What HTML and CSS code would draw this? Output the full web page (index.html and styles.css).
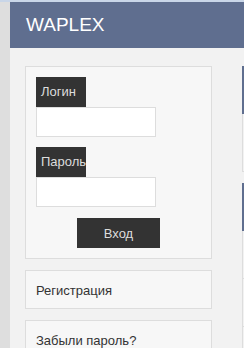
FILE: index.html
```html
<!DOCTYPE html>
<html lang="ru">
<head>
  <meta charset="UTF-8" />
  <meta name="viewport" content="width=device-width, initial-scale=1" />
  <title>WAPLEX</title>
  <link rel="stylesheet" href="styles.css">
</head>
<body>
  <div class="page">
    <div class="header">WAPLEX</div>
    <div class="main">
      <div class="left">
        <form class="box login">
          <label class="label">Логин</label>
          <input class="field" type="text">
          <label class="label">Пароль</label>
          <input class="field" type="password">
          <button class="btn" type="button">Вход</button>
        </form>
        <div class="box link">Регистрация</div>
        <div class="box link">Забыли пароль?</div>
      </div>
      <div class="right">
        <div class="panel">
          <div class="panel-head"></div>
          <div class="panel-body short"></div>
        </div>
        <div class="panel">
          <div class="panel-head"></div>
          <div class="panel-body">
            <div class="item"></div>
            <div class="item"></div>
            <div class="item"></div>
          </div>
        </div>
      </div>
    </div>
  </div>
</body>
</html>
```

FILE: styles.css
```css
html, body { height: 100%; }
body {
  margin: 0;
  background: #dedede;
  border-top: 2px solid #c9d6e8;
  box-sizing: border-box;
  font-family: "Liberation Sans", Arial, sans-serif;
  font-size: 13px;
  color: #333;
  overflow: hidden;
}
.page { margin-left: 10px; background: #f2f2f2; min-height: 100%; }
.header {
  height: 46px;
  line-height: 46px;
  padding-left: 16px;
  background: #5f6e8f;
  color: #fff;
  font-size: 19px;
}
.main { display: flex; gap: 30px; padding: 18px 15px; }
.left { flex: 0 0 187px; display: flex; flex-direction: column; gap: 11px; }
.box { border: 1px solid #ddd; background: #f7f7f7; box-sizing: border-box; }
.login { padding: 10px; display: flex; flex-direction: column; align-items: flex-start; margin: 0; }
.label {
  width: 50px;
  height: 30px;
  line-height: 30px;
  padding: 0 0 0 5px;
  box-sizing: border-box;
  background: #333;
  color: #ddd;
  white-space: nowrap;
  overflow: hidden;
}
.field {
  width: 120px;
  height: 30px;
  margin: 0 0 10px;
  border: 1px solid #ddd;
  background: #fff;
  box-sizing: border-box;
  padding: 0 4px;
}
.btn {
  align-self: center;
  width: 83px;
  height: 30px;
  margin-top: 1px;
  border: 0;
  background: #333;
  color: #ddd;
  font-family: inherit;
  font-size: 13px;
}
.link { padding: 11px 10px 9px; line-height: 17px; }
.right { flex: 0 0 200px; display: flex; flex-direction: column; gap: 11px; }
.panel-head { height: 48px; background: #5f6e8f; }
.panel-body { border: 1px solid #ddd; border-top: 0; }
.panel-body.short { height: 57px; }
.item { height: 47px; border-bottom: 1px solid #ddd; }
```
